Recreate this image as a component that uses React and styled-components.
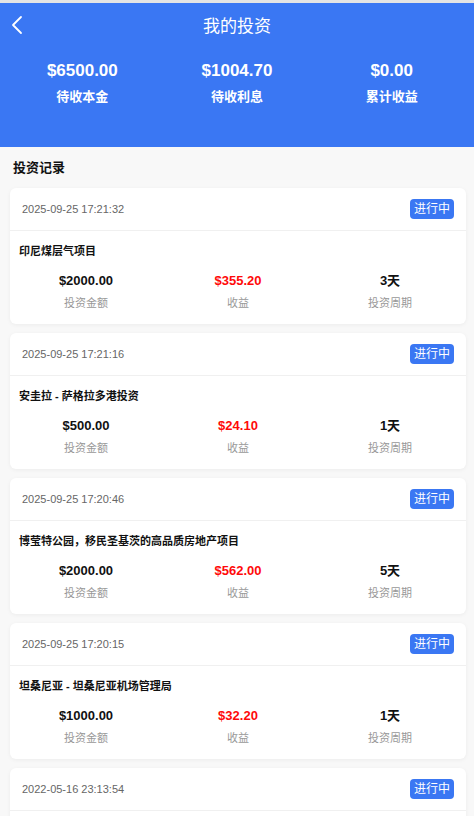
import React from "react"
import styled, { createGlobalStyle } from "styled-components"

const GlobalStyle = createGlobalStyle`
  * { box-sizing: border-box; }
  body {
    margin: 0;
    background: #f8f8f8;
    font-family: "Liberation Sans", Arial, "Noto Sans CJK SC", sans-serif;
  }
`

const Page = styled.div`
  width: 474px;
  min-height: 816px;
  background: #f8f8f8;
  border-top: 3px solid #e4e4e4;
`

const Header = styled.header`
  background: #3a77f3;
  color: #fff;
  padding-bottom: 41px;
`

const NavBar = styled.div`
  position: relative;
  height: 46px;
  padding-top: 2px;
  display: flex;
  justify-content: center;
`

const BackButton = styled.button`
  position: absolute;
  left: 11px;
  top: 12px;
  width: 12px;
  height: 20px;
  padding: 0;
  border: none;
  background: none;
  display: flex;
`

const Title = styled.h1`
  margin: 0;
  font-size: 17px;
  font-weight: 400;
  line-height: 44px;
`

const Stats = styled.div`
  display: grid;
  grid-template-columns: repeat(3, 1fr);
  padding: 12px 5px 0;
`

const Stat = styled.div`
  display: flex;
  flex-direction: column;
  align-items: center;
  gap: 7px;
`

const StatValue = styled.div`
  font-size: 17px;
  font-weight: 700;
  line-height: 20px;
`

const StatLabel = styled.div`
  font-size: 13px;
  font-weight: 700;
  line-height: 18px;
`

const Section = styled.section`
  padding: 12px 8px 0 10px;
`

const SectionTitle = styled.h2`
  margin: 0 0 11px 3px;
  font-size: 13px;
  font-weight: 700;
  line-height: 18px;
  color: #111;
`

const List = styled.div`
  display: flex;
  flex-direction: column;
  gap: 9px;
`

const Card = styled.div`
  background: #fff;
  border-radius: 6px;
  box-shadow: 0 1px 4px rgba(0, 0, 0, 0.05);
  overflow: hidden;
`

const CardHead = styled.div`
  height: 43px;
  display: flex;
  align-items: center;
  justify-content: space-between;
  padding: 0 12px;
  border-bottom: 1px solid #f0f0f0;
`

const Time = styled.span`
  font-size: 11px;
  color: #666;
`

const Badge = styled.span`
  display: inline-block;
  height: 20px;
  line-height: 20px;
  padding: 0 4px;
  border-radius: 4px;
  background: #3a77f3;
  color: #fff;
  font-size: 12px;
`

const CardBody = styled.div`
  padding: 12px 0 13px;
`

const ProjectName = styled.div`
  padding-left: 9px;
  font-size: 11px;
  font-weight: 700;
  line-height: 16px;
  color: #111;
  margin-bottom: 13px;
`

const Figures = styled.div`
  display: grid;
  grid-template-columns: repeat(3, 1fr);
`

const Figure = styled.div`
  display: flex;
  flex-direction: column;
  align-items: center;
  gap: 5px;
`

const FigureValue = styled.div`
  font-size: 13px;
  font-weight: 700;
  line-height: 18px;
  color: ${(p) => (p.$red ? "#ff0a0a" : "#111")};
`

const FigureLabel = styled.div`
  font-size: 11px;
  line-height: 16px;
  color: #999;
`

const records = [
  { time: "2025-09-25 17:21:32", name: "印尼煤层气项目", amount: "$2000.00", profit: "$355.20", days: "3天" },
  { time: "2025-09-25 17:21:16", name: "安圭拉 - 萨格拉多港投资", amount: "$500.00", profit: "$24.10", days: "1天" },
  { time: "2025-09-25 17:20:46", name: "博莹特公园，移民圣基茨的高品质房地产项目", amount: "$2000.00", profit: "$562.00", days: "5天" },
  { time: "2025-09-25 17:20:15", name: "坦桑尼亚 - 坦桑尼亚机场管理局", amount: "$1000.00", profit: "$32.20", days: "1天" },
  { time: "2022-05-16 23:13:54", name: "印尼煤层气项目", amount: "$1000.00", profit: "$30.00", days: "1天" },
]

const App = () => {
  return (
    <Page>
      <GlobalStyle />
      <Header>
        <NavBar>
          <BackButton>
            <svg width="12" height="20" viewBox="0 0 12 20" fill="none">
              <path d="M10 2 L2 10 L10 18" stroke="#fff" strokeWidth="1.8" strokeLinecap="round" strokeLinejoin="round" />
            </svg>
          </BackButton>
          <Title>我的投资</Title>
        </NavBar>
        <Stats>
          <Stat>
            <StatValue>$6500.00</StatValue>
            <StatLabel>待收本金</StatLabel>
          </Stat>
          <Stat>
            <StatValue>$1004.70</StatValue>
            <StatLabel>待收利息</StatLabel>
          </Stat>
          <Stat>
            <StatValue>$0.00</StatValue>
            <StatLabel>累计收益</StatLabel>
          </Stat>
        </Stats>
      </Header>
      <Section>
        <SectionTitle>投资记录</SectionTitle>
        <List>
          {records.map((r, i) => (
            <Card key={i}>
              <CardHead>
                <Time>{r.time}</Time>
                <Badge>进行中</Badge>
              </CardHead>
              <CardBody>
                <ProjectName>{r.name}</ProjectName>
                <Figures>
                  <Figure>
                    <FigureValue>{r.amount}</FigureValue>
                    <FigureLabel>投资金额</FigureLabel>
                  </Figure>
                  <Figure>
                    <FigureValue $red>{r.profit}</FigureValue>
                    <FigureLabel>收益</FigureLabel>
                  </Figure>
                  <Figure>
                    <FigureValue>{r.days}</FigureValue>
                    <FigureLabel>投资周期</FigureLabel>
                  </Figure>
                </Figures>
              </CardBody>
            </Card>
          ))}
        </List>
      </Section>
    </Page>
  )
}

export default App
